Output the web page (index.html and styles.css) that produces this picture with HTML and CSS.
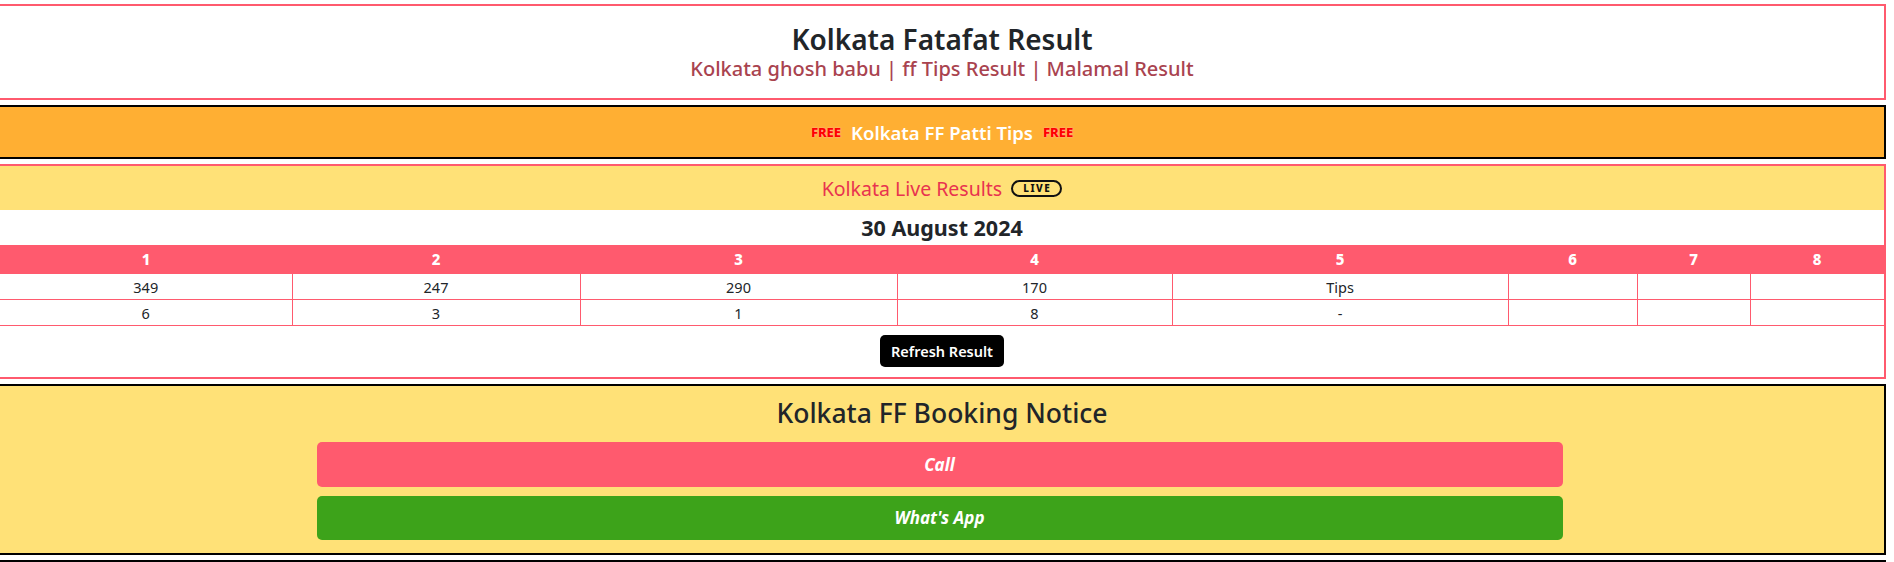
FILE: index.html
```html
<!DOCTYPE html>
<html lang="en">
<head>
  <meta charset="UTF-8" />
  <meta name="viewport" content="width=device-width, initial-scale=1.0" />
  <title>Kolkata Fatafat Result</title>
  <link rel="stylesheet" href="styles.css">
</head>
<body>
  <div class="page">
    <div class="box head">
      <h1>Kolkata Fatafat Result</h1>
      <p>Kolkata ghosh babu | ff Tips Result | Malamal Result</p>
    </div>

    <div class="box tips">
      <span class="free">FREE</span>
      <span class="tips-title">Kolkata FF Patti Tips</span>
      <span class="free">FREE</span>
    </div>

    <div class="box live-box">
      <div class="live-head">Kolkata Live Results <span class="live">LIVE</span></div>
      <div class="date">30 August 2024</div>
      <table class="results">
        <thead>
          <tr><th>1</th><th>2</th><th>3</th><th>4</th><th>5</th><th>6</th><th>7</th><th>8</th></tr>
        </thead>
        <tbody>
          <tr><td>349</td><td>247</td><td>290</td><td>170</td><td>Tips</td><td></td><td></td><td></td></tr>
          <tr><td>6</td><td>3</td><td>1</td><td>8</td><td>-</td><td></td><td></td><td></td></tr>
        </tbody>
      </table>
      <div class="refresh"><button onclick="location.reload()">Refresh Result</button></div>
    </div>

    <div class="box notice">
      <h2>Kolkata FF Booking Notice</h2>
      <a class="btn call" href="#">Call</a>
      <a class="btn wa" href="#">What's App</a>
    </div>

    <div class="box next"></div>
  </div>
</body>
</html>
```

FILE: styles.css
```css
html, body { overflow: hidden; }
body { margin: 0; background: #fff; font-family: "Noto Sans", "Open Sans", sans-serif; color: #212529; }
.page { margin: 4px 8px 0 -2px; }
.box { border: 2px solid #ff5a6e; margin-bottom: 5px; text-align: center; }

.head { height: 92px; background: #fff; display: flex; flex-direction: column; justify-content: center; }
.head h1 { margin: 0; font-size: 28px; font-weight: 600; line-height: 34px; color: #212529; }
.head p { margin: 0; font-size: 20px; font-weight: 500; line-height: 26px; color: #a9434f; }

.tips { height: 50px; border-color: #000; background: #ffaf33; display: flex; align-items: center; justify-content: center; gap: 10px; }
.tips-title { color: #fff; font-size: 18.5px; font-weight: 600; }
.free { color: #ff0000; font-size: 13px; font-weight: 800; text-shadow: 0 0 2px #ffb3c0; }

.live-head { height: 44px; background: #ffe177; color: #e8334f; font-size: 19.5px; display: flex; align-items: center; justify-content: center; gap: 9px; }
.live { border: 2px solid #111; border-radius: 10px; color: #111; font-size: 10px; font-weight: 800; letter-spacing: 1.5px; line-height: 11px; padding: 1px 9px 1px 10px; }
.date { height: 35px; line-height: 35px; font-size: 21.5px; font-weight: 700; color: #212529; }

.results { width: 100%; border-collapse: collapse; font-size: 14px; }
.results th { background: #ff5a6e; color: #fff; font-weight: 800; height: 28px; padding: 0; font-size: 15px; }
.results td { border: 1px solid #ff5a6e; height: 25px; padding: 0; color: #212529; font-weight: 400; font-size: 14.5px; }
.results td:first-child { border-left: none; }
.results td:last-child { border-right: none; }
.results th:nth-child(1) { width: 292px; }
.results th:nth-child(2) { width: 288px; }
.results th:nth-child(3) { width: 317px; }
.results th:nth-child(4) { width: 275px; }
.results th:nth-child(5) { width: 336px; }
.results th:nth-child(6) { width: 129px; }
.results th:nth-child(7) { width: 113px; }

.refresh { padding: 9px 0 10px; line-height: 0; }
.refresh button { background: #000; color: #fff; border: none; border-radius: 5px; height: 32px; line-height: 32px; padding: 0 11px; font-family: inherit; font-size: 14.5px; font-weight: 600; }

.notice { height: 167px; border-color: #000; background: #ffe177; display: flex; flex-direction: column; align-items: center; }
.notice h2 { margin: 10px 0 12px; font-size: 26.5px; font-weight: 500; line-height: 34px; color: #212529; }
.btn { display: block; width: 1246px; height: 45px; line-height: 45px; margin-right: 5px; border-radius: 5px; color: #fff; font-size: 17px; font-weight: 700; font-style: italic; text-decoration: none; }
.btn.call { background: #ff5a6e; margin-bottom: 9px; }
.btn.wa { background: #3da31a; height: 44px; line-height: 44px; }

.next { border-color: #000; border-bottom: none; height: 20px; }
```
